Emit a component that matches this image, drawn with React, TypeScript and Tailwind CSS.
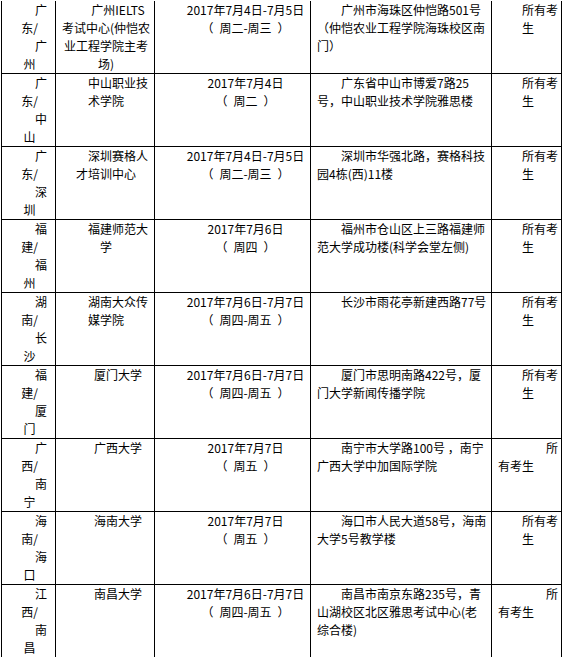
type Row = {
  region: string[];
  venue: string[];
  date: string[];
  address: string[];
  split?: boolean;
};

const rows: Row[] = [
  {
    region: ['广', '东/', '广', '州'],
    venue: ['广州IELTS', '考试中心(仲恺农', '业工程学院主考', '场)'],
    date: ['2017年7月4日-7月5日', '周二-周三'],
    address: ['广州市海珠区仲恺路501号', '（仲恺农业工程学院海珠校区南', '门）'],
  },
  {
    region: ['广', '东/', '中', '山'],
    venue: ['中山职业技', '术学院'],
    date: ['2017年7月4日', '周二'],
    address: ['广东省中山市博爱7路25', '号，中山职业技术学院雅思楼'],
  },
  {
    region: ['广', '东/', '深', '圳'],
    venue: ['深圳赛格人', '才培训中心'],
    date: ['2017年7月4日-7月5日', '周二-周三'],
    address: ['深圳市华强北路，赛格科技', '园4栋(西)11楼'],
  },
  {
    region: ['福', '建/', '福', '州'],
    venue: ['福建师范大', '学'],
    date: ['2017年7月6日', '周四'],
    address: ['福州市仓山区上三路福建师', '范大学成功楼(科学会堂左侧)'],
  },
  {
    region: ['湖', '南/', '长', '沙'],
    venue: ['湖南大众传', '媒学院'],
    date: ['2017年7月6日-7月7日', '周四-周五'],
    address: ['长沙市雨花亭新建西路77号'],
  },
  {
    region: ['福', '建/', '厦', '门'],
    venue: ['厦门大学'],
    date: ['2017年7月6日-7月7日', '周四-周五'],
    address: ['厦门市思明南路422号，厦', '门大学新闻传播学院'],
  },
  {
    region: ['广', '西/', '南', '宁'],
    venue: ['广西大学'],
    date: ['2017年7月7日', '周五'],
    address: ['南宁市大学路100号 ，南宁', '广西大学中加国际学院'],
    split: true,
  },
  {
    region: ['海', '南/', '海', '口'],
    venue: ['海南大学'],
    date: ['2017年7月7日', '周五'],
    address: ['海口市人民大道58号，海南', '大学5号教学楼'],
  },
  {
    region: ['江', '西/', '南', '昌'],
    venue: ['南昌大学'],
    date: ['2017年7月6日-7月7日', '周四-周五'],
    address: ['南昌市南京东路235号，青', '山湖校区北区雅思考试中心(老', '综合楼)'],
    split: true,
  },
];

function ExamRow({ row }: { row: Row }) {
  const [day, weekday] = row.date;
  return (
    <>
      <div className="bg-white pl-[10px] pr-[8px]">
        {row.region.map((t, i) => (
          <div key={i} className={i % 2 === 0 ? 'text-right' : 'text-center'}>
            {t}
          </div>
        ))}
      </div>
      <div className="bg-white pl-[5px] pr-[3px] text-center">
        {row.venue.map((t, i) => (
          <div key={i} className={i === 0 ? 'pl-[24px]' : ''}>
            {t}
          </div>
        ))}
      </div>
      <div className="bg-white pl-[28px] pr-[2px] text-center">
        <div>{day}</div>
        <div>
          <span className="mr-[6px]">（</span>
          {weekday}
          <span className="ml-[6px]">）</span>
        </div>
      </div>
      <div className="bg-white pl-[6px] pr-[2px]">
        {row.address.map((t, i) => (
          <div key={i} className={i === 0 ? 'pl-[24px]' : ''}>
            {t}
          </div>
        ))}
      </div>
      <div className="bg-white pl-[6px] pr-[3px]">
        {row.split ? (
          <>
            <div className="text-right">所</div>
            <div>有考生</div>
          </>
        ) : (
          <>
            <div className="pl-[24px] text-center">所有考</div>
            <div className="text-center">生</div>
          </>
        )}
      </div>
    </>
  );
}

export default function App() {
  return (
    <div className="min-h-screen bg-white pl-[1px] pt-[1px] font-['Noto_Sans_CJK_SC','Noto_Sans',sans-serif] text-[12px] leading-[18px] text-black">
      <div className="grid w-[561px] grid-cols-[53px_98px_155px_180px_69px] auto-rows-[72px] gap-px whitespace-nowrap bg-black px-px pb-px">
        {rows.map((row, i) => (
          <ExamRow key={i} row={row} />
        ))}
      </div>
    </div>
  );
}
